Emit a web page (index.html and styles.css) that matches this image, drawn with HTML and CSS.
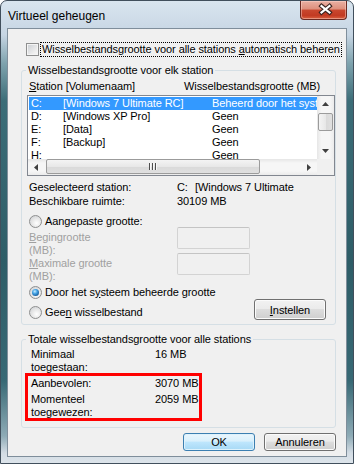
FILE: index.html
```html
<!DOCTYPE html>
<html lang="nl">
<head>
  <meta charset="UTF-8">
  <title>Virtueel geheugen</title>
  <link rel="stylesheet" href="styles.css">
</head>
<body>
  <div class="window">
    <div class="titlebar">
      <span class="title">Virtueel geheugen</span>
      <div class="close">
        <svg width="45" height="17" viewBox="0 0 45 17">
          <path d="M20.5 5 L28.5 11.5 M28.5 5 L20.5 11.5" stroke="#3b2420" stroke-width="4.4" stroke-linecap="square" fill="none"/>
          <path d="M20.5 5 L28.5 11.5 M28.5 5 L20.5 11.5" stroke="#fff" stroke-width="2.2" stroke-linecap="square" fill="none"/>
        </svg>
      </div>
    </div>

    <div class="client">
      <div class="auto">
        <span class="checkbox"></span>
        <span class="focus">Wisselbestandsgrootte voor alle stations <u>a</u>utomatisch beheren</span>
      </div>

      <fieldset class="group">
        <legend>Wisselbestandsgrootte voor elk station</legend>
        <div class="cols">
          <span><u>S</u>tation [Volumenaam]</span>
          <span>Wisselbestandsgrootte (MB)</span>
        </div>
        <div class="listbox">
          <div class="rows">
            <div class="row selected"><span>C:</span><span>[Windows 7 Ultimate RC]</span><span>Beheerd door het systeem</span></div>
            <div class="row"><span>D:</span><span>[Windows XP Pro]</span><span>Geen</span></div>
            <div class="row"><span>E:</span><span>[Data]</span><span>Geen</span></div>
            <div class="row"><span>F:</span><span>[Backup]</span><span>Geen</span></div>
            <div class="row"><span>H:</span><span></span><span>Geen</span></div>
          </div>
          <div class="vscroll">
            <span class="arrow"><svg width="7" height="4" viewBox="0 0 7 4"><polygon points="3.5,0 7,4 0,4" fill="#404040"/></svg></span>
            <span class="track"><span class="thumb vthumb"></span></span>
            <span class="arrow"><svg width="7" height="4" viewBox="0 0 7 4"><polygon points="0,0 7,0 3.5,4" fill="#404040"/></svg></span>
          </div>
          <div class="hscroll">
            <span class="arrow"><svg width="4" height="7" viewBox="0 0 4 7"><polygon points="0,3.5 4,0 4,7" fill="#404040"/></svg></span>
            <span class="track"><span class="thumb hthumb"></span></span>
            <span class="arrow"><svg width="4" height="7" viewBox="0 0 4 7"><polygon points="0,0 4,3.5 0,7" fill="#404040"/></svg></span>
          </div>
          <div class="corner"></div>
        </div>

        <div class="info">
          <span>Geselecteerd station:</span>
          <span><span class="drive">C:</span>[Windows 7 Ultimate</span>
          <span>Beschikbare ruimte:</span>
          <span>30109 MB</span>
        </div>

        <div class="radio"><span class="dot"></span><span>Aangepaste <u>g</u>rootte:</span></div>
        <div class="sizes">
          <span class="disabled"><u>B</u>egingrootte (MB):</span>
          <span class="field"></span>
          <span class="disabled"><u>M</u>aximale grootte (MB):</span>
          <span class="field"></span>
        </div>
        <div class="radio"><span class="dot on"></span><span>Door het s<u>y</u>steem beheerde grootte</span></div>
        <div class="last-row">
          <div class="radio"><span class="dot"></span><span>Gee<u>n</u> wisselbestand</span></div>
          <span class="btn set"><u>I</u>nstellen</span>
        </div>
      </fieldset>

      <fieldset class="group totals-group">
        <legend>Totale wisselbestandsgrootte voor alle stations</legend>
        <div class="totals">
          <span>Minimaal toegestaan:</span><span>16 MB</span>
          <span>Aanbevolen:</span><span>3070 MB</span>
          <span>Momenteel toegewezen:</span><span>2059 MB</span>
        </div>
      </fieldset>

      <div class="buttons">
        <span class="btn default">OK</span>
        <span class="btn">Annuleren</span>
      </div>

      <div class="mark"></div>
    </div>
  </div>
</body>
</html>
```

FILE: styles.css
```css
*
{
  box-sizing: border-box;
}
body
{
  margin: 0;
  background: #fff;
  font-family: "Liberation Sans", Arial, sans-serif;
  font-size: 11px;
  line-height: 14px;
  letter-spacing: -0.08px;
  color: #000;
}
u
{
  text-decoration: underline;
  text-underline-offset: 1px;
}

/* window frame */
.window
{
  width: 354px;
  height: 464px;
  border: 1px solid #414f5c;
  border-radius: 7px 7px 0 0;
  padding: 0 6px 6px;
  display: flex;
  flex-direction: column;
  background: linear-gradient(to bottom, #d9e5ef 0, #c6d5e3 34px, #7fa3ae 62px, #3c6d78 100px, #2e5d67 260px, #386975 380px, #8eabb6 435px, #d3dce4 452px, #dfe6ec 464px);
}
.titlebar
{
  height: 27px;
  display: flex;
  justify-content: space-between;
  align-items: flex-start;
  flex-shrink: 0;
}
.title
{
  margin: 8px 0 0 1px;
  font-size: 12px;
  line-height: 14px;
  letter-spacing: 0;
}
.close
{
  width: 47px;
  height: 19px;
  border: 1px solid #6b2a22;
  border-top: none;
  border-radius: 0 0 4px 4px;
  background: linear-gradient(to bottom, #eab0a3 0, #de8f7c 45%, #c9482f 50%, #c23a22 80%, #d9603f 100%);
  box-shadow: inset 0 0 0 1px rgba(255, 220, 210, 0.45);
}
.close svg
{
  display: block;
}

.client
{
  position: relative;
  height: 429px;
  border: 1px solid #7f8e9b;
  background: #f0f0f0;
  display: flex;
  flex-direction: column;
}

/* checkbox line */
.auto
{
  margin-top: 13px;
  padding-left: 18px;
  display: flex;
  align-items: center;
  gap: 1px;
}
.checkbox
{
  width: 13px;
  height: 13px;
  border: 1px solid #8e8f8f;
  background: linear-gradient(135deg, #c9cdd2, #eeeeee 70%, #f7f7f7);
  box-shadow: inset 0 0 0 1px #f4f4f4;
  flex-shrink: 0;
}
.focus
{
  border: 1px dotted #000;
  padding: 0 1px;
  line-height: 13px;
  white-space: nowrap;
}

/* group boxes */
fieldset.group
{
  margin: 6px 0 0 13px;
  padding: 0 0 4px;
  width: 315px;
  min-width: 0;
  border: 1px solid #d5dfe5;
  border-radius: 3px;
}
.group legend
{
  margin-left: 4px;
  padding: 0 2px;
  line-height: 14px;
}
.cols
{
  margin-top: 2px;
  padding-left: 7px;
  display: grid;
  grid-template-columns: 155px auto;
  white-space: nowrap;
}

.listbox
{
  margin: 2px 0 0 5px;
  width: 308px;
  height: 81px;
  border: 1px solid #828790;
  background: #fff;
  display: grid;
  grid-template-columns: 1fr 17px;
  grid-template-rows: 1fr 16px;
}
.rows
{
  overflow: hidden;
  padding: 1px 0 0 1px;
}
.row
{
  width: 288px;
  height: 13px;
  line-height: 13px;
  padding-left: 2px;
  display: grid;
  grid-template-columns: 32px 149px 200px;
  white-space: nowrap;
  overflow: hidden;
}
.row.selected
{
  background: #3399ff;
  color: #fff;
}

.vscroll, .hscroll
{
  display: flex;
}
.vscroll
{
  flex-direction: column;
  background: linear-gradient(to right, #e6e6e6, #f6f6f6 25%, #f6f6f6 75%, #ebebeb);
}
.hscroll
{
  background: linear-gradient(to bottom, #e6e6e6, #f6f6f6 25%, #f6f6f6 75%, #ebebeb);
}
.arrow
{
  width: 16px;
  height: 16px;
  display: flex;
  align-items: center;
  justify-content: center;
  flex-shrink: 0;
}
.vscroll .arrow
{
  width: 17px;
}
.track
{
  flex: 1;
  display: flex;
}
.thumb
{
  border: 1px solid #9b9b9b;
  border-radius: 2px;
}
.vthumb
{
  margin: 1px 1px 0;
  width: 15px;
  height: 18px;
  background: linear-gradient(to right, #f4f4f4, #e8e8e8 50%, #d9d9d9 51%, #e0e0e0);
}
.hthumb
{
  margin: 0 0 0 2px;
  width: 214px;
  height: 15px;
  background: linear-gradient(to bottom, #f4f4f4, #e8e8e8 50%, #d9d9d9 51%, #e0e0e0);
  display: flex;
  align-items: center;
  justify-content: center;
}
.hthumb::after
{
  content: "";
  width: 8px;
  height: 7px;
  background: repeating-linear-gradient(to right, #4d4d4d 0 1px, #f8f8f8 1px 2px, transparent 2px 3px);
}
.corner
{
  background: #f0f0f0;
}

.info
{
  margin-top: 4px;
  padding-left: 7px;
  display: grid;
  grid-template-columns: 148px auto;
  white-space: nowrap;
}
.drive
{
  display: inline-block;
  width: 18px;
}

.radio
{
  height: 14px;
  padding-left: 7px;
  display: flex;
  align-items: center;
  gap: 3px;
  white-space: nowrap;
}
.group > .radio
{
  margin-top: 6px;
}
.dot
{
  width: 13px;
  height: 13px;
  border-radius: 50%;
  border: 1px solid #8e8f8f;
  background: radial-gradient(circle at 60% 65%, #ffffff, #e8e8e8 45%, #c9ccd0 100%);
  display: flex;
  align-items: center;
  justify-content: center;
  flex-shrink: 0;
}
.dot.on::after
{
  content: "";
  width: 7px;
  height: 7px;
  border-radius: 50%;
  background: radial-gradient(circle at 40% 35%, #c9ecff 0, #46a5e6 35%, #185c9c 75%, #0c3b6a 100%);
}

.sizes
{
  margin-top: -1px;
  padding-left: 7px;
  display: grid;
  grid-template-columns: 148px 73px;
  grid-auto-rows: 26px;
}
.disabled
{
  width: 88px;
  padding-top: 4px;
  line-height: 13px;
  color: #a0a0a0;
}
.field
{
  height: 22px;
  border: 1px solid #d3d3d3;
  border-top-color: #c4c4c4;
  border-radius: 2px;
  background: #f0f0f0;
}

.last-row
{
  padding-right: 9px;
  display: flex;
  justify-content: space-between;
  align-items: flex-end;
}
.last-row .radio
{
  padding-bottom: 1px;
  height: 15px;
}

/* buttons */
.btn
{
  width: 72px;
  height: 21px;
  border: 1px solid #707070;
  border-radius: 3px;
  background: linear-gradient(to bottom, #f2f2f2 0, #ebebeb 45%, #dddddd 50%, #cfcfcf 100%);
  box-shadow: inset 0 0 0 1px #fbfbfb;
  display: flex;
  align-items: center;
  justify-content: center;
  white-space: nowrap;
}
.btn.default
{
  border-color: #3c7fb1;
  background: linear-gradient(to bottom, #eaf6fd 0, #d9f0fc 45%, #bee6fd 50%, #a7d9f5 100%);
  box-shadow: inset 0 0 0 1px #def2fc;
}

fieldset.totals-group
{
  margin-top: 7px;
  padding-bottom: 8px;
}
.totals
{
  margin-top: 2px;
  padding-left: 9px;
  display: grid;
  grid-template-columns: 80px auto;
  column-gap: 44px;
  row-gap: 3px;
  line-height: 13px;
}

.buttons
{
  margin-top: 5px;
  padding-right: 10px;
  display: flex;
  justify-content: flex-end;
  gap: 9px;
}
.buttons .btn
{
  height: 18px;
}

/* red highlight drawn over the dialog */
.mark
{
  position: absolute;
  left: 17px;
  top: 344px;
  width: 177px;
  height: 48px;
  border: 3px solid #ff0000;
}
```
